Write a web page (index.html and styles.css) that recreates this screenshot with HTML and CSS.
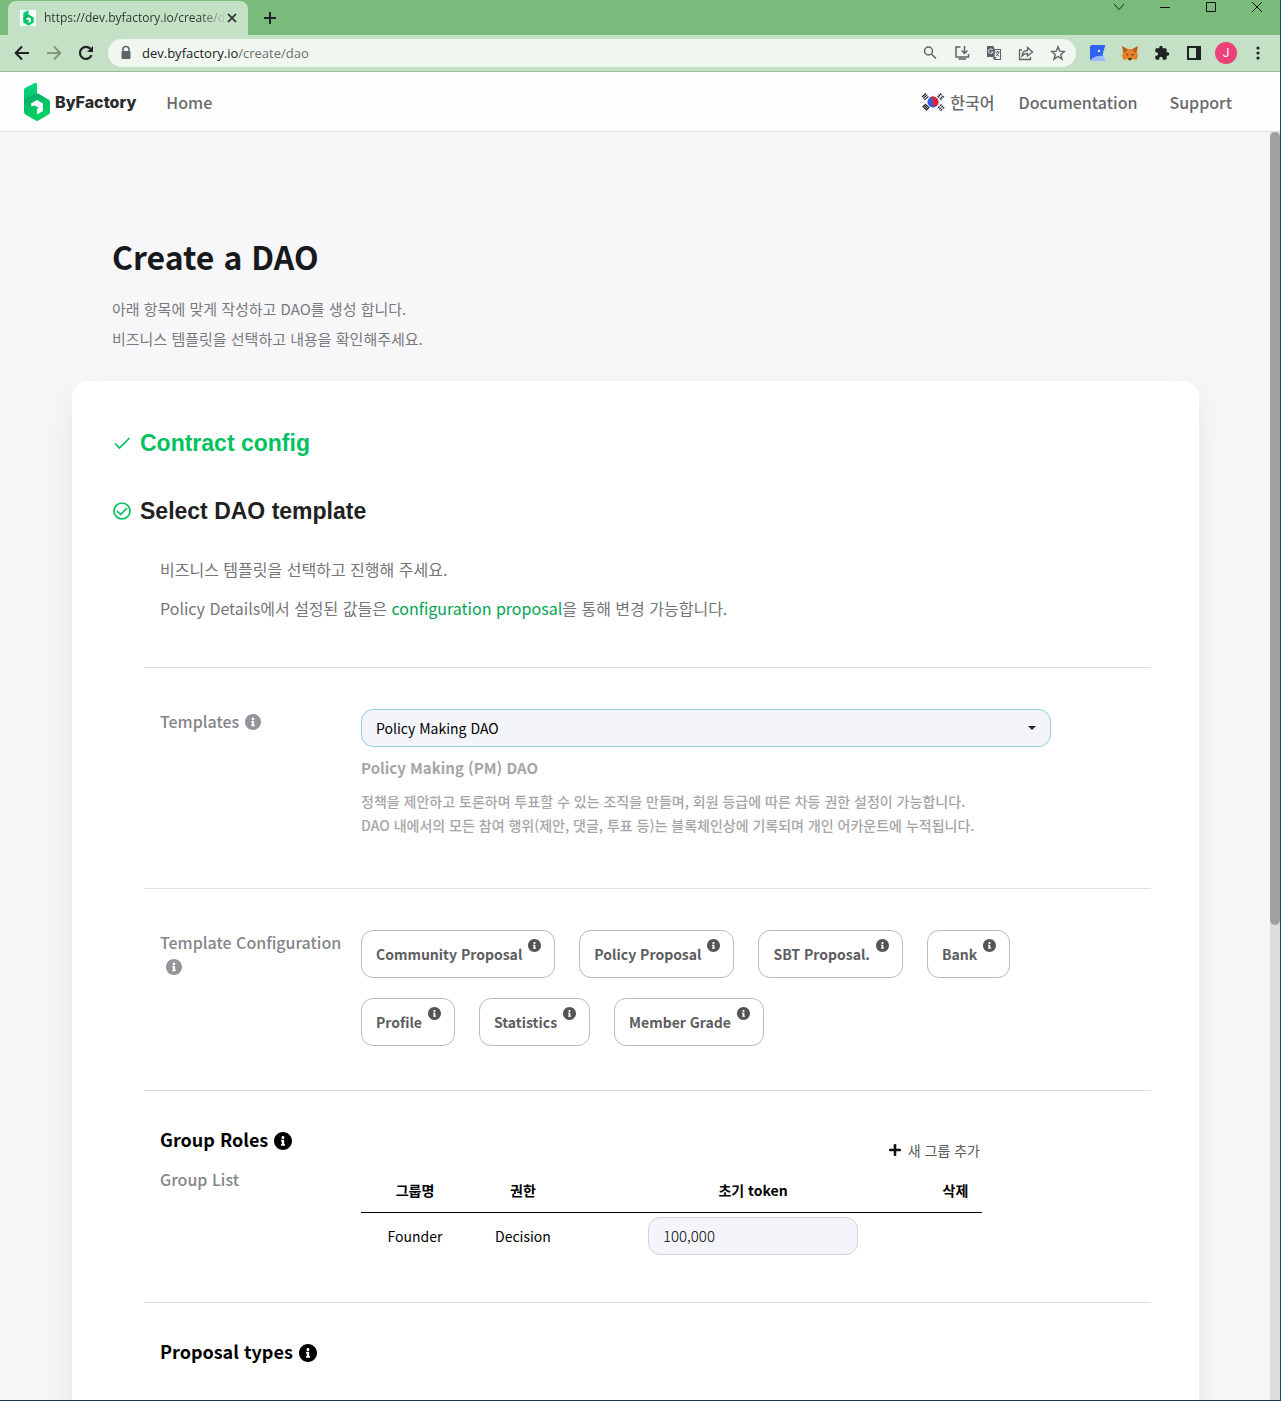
FILE: index.html
```html
<!DOCTYPE html>
<html lang="ko">
<head>
<meta charset="utf-8">
<title>Create a DAO - ByFactory</title>
<link rel="stylesheet" href="styles.css">
</head>
<body>
<svg class="defs" aria-hidden="true">
  <defs>
    <linearGradient id="stem" x1="0" y1="0" x2="0" y2="1"><stop offset="0" stop-color="#0bd982"/><stop offset="1" stop-color="#04b868"/></linearGradient>
    <linearGradient id="cube" x1="0" y1="0" x2="0.4" y2="1"><stop offset="0" stop-color="#0aa565"/><stop offset="0.5" stop-color="#06c167"/><stop offset="1" stop-color="#00d264"/></linearGradient>
    <symbol id="logo" viewBox="0 0 26 40">
      <path fill="url(#stem)" d="M1 6 10.500 1Q13 0 13 3V13L0 24V8Q0 6.700 1 6Z"/>
      <path fill="url(#cube)" d="M1.500 17.500 11.500 11.800Q13 11 14.500 11.800L24.500 17.500Q26 18.400 26 20V30Q26 31.700 24.500 32.600L14.500 38.500Q13 39.300 11.500 38.500L1.500 32.600Q0 31.700 0 30V20Q0 18.400 1.500 17.500Z"/>
      <path fill="#fff" d="M7 21.500 13 18 19 21.500V29L13 32.500V27.500L14.500 25.500 10.500 23.500 7.500 24.500Z"/>
    </symbol>
    <symbol id="info" viewBox="8 8 496 496"><path fill="currentColor" d="M256 8C119.043 8 8 119.083 8 256c0 136.997 111.043 248 248 248s248-111.003 248-248C504 119.083 392.957 8 256 8zm0 110c23.196 0 42 18.804 42 42s-18.804 42-42 42-42-18.804-42-42 18.804-42 42-42zm56 254c0 6.627-5.373 12-12 12h-88c-6.627 0-12-5.373-12-12v-24c0-6.627 5.373-12 12-12h12v-64h-12c-6.627 0-12-5.373-12-12v-24c0-6.627 5.373-12 12-12h64c6.627 0 12 5.373 12 12v100h12c6.627 0 12 5.373 12 12v24z"/></symbol>
  </defs>
</svg>
<div class="window">
  <div class="tabstrip">
    <div class="tab">
      <span class="favicon"><svg width="11" height="16"><use href="#logo"/></svg></span>
      <span class="tab-title">https://dev.byfactory.io/create/d</span>
      <button class="icon-button" aria-label="Close tab"><svg width="10" height="10" viewBox="0 0 10 10"><path d="M1 1 9 9M9 1 1 9" stroke="#202124" stroke-width="1.700"/></svg></button>
    </div>
    <button class="icon-button new-tab" aria-label="New tab"><svg width="12" height="12" viewBox="0 0 12 12"><path d="M6 0V12M0 6H12" stroke="#202124" stroke-width="2"/></svg></button>
    <div class="window-controls">
      <button class="icon-button" aria-label="Search tabs"><svg width="12" height="12" viewBox="0 0 12 12"><path d="M1 3 6 8.500 11 3" fill="none" stroke="#202124"/></svg></button>
      <button class="icon-button" aria-label="Minimize"><svg width="12" height="12" viewBox="0 0 12 12"><path d="M1 6.500H11" stroke="#111"/></svg></button>
      <button class="icon-button" aria-label="Maximize"><svg width="12" height="12" viewBox="0 0 12 12"><path d="M1.500 1.500H10.500V10.500H1.500Z" fill="none" stroke="#111"/></svg></button>
      <button class="icon-button" aria-label="Close"><svg width="12" height="12" viewBox="0 0 12 12"><path d="M1 1 11 11M11 1 1 11" stroke="#111"/></svg></button>
    </div>
  </div>

  <div class="toolbar">
    <button class="icon-button" aria-label="Back"><svg width="16" height="16" viewBox="0 0 16 16"><path d="M15 8H2M8 1.500 1.700 8 8 14.500" fill="none" stroke="#202124" stroke-width="2"/></svg></button>
    <button class="icon-button" aria-label="Forward"><svg width="16" height="16" viewBox="0 0 16 16"><path d="M1 8H14M8 1.500 14.300 8 8 14.500" fill="none" stroke="#84987f" stroke-width="2"/></svg></button>
    <button class="icon-button" aria-label="Reload"><svg width="16" height="16" viewBox="0 0 16 16"><path d="M13.500 10.200A6 6 0 1 1 12.300 3.800" fill="none" stroke="#202124" stroke-width="2.200"/><path d="M15 1V7H9Z" fill="#202124"/></svg></button>
    <div class="omnibox">
      <svg class="lock" width="16" height="16" viewBox="0 0 16 16"><path d="M5 7V4.500a3 3 0 0 1 6 0V7" fill="none" stroke="#5f6368" stroke-width="1.500"/><rect x="3.500" y="6" width="9" height="8" rx="1" fill="#5f6368"/></svg>
      <span class="url">dev.byfactory.io<span class="path">/create/dao</span></span>
      <button class="icon-button" aria-label="Zoom"><svg width="16" height="16" viewBox="0 0 16 16" fill="none" stroke="#5f6368" stroke-width="1.500"><circle cx="6.500" cy="6" r="4"/><path d="M9.500 9 14 13.500"/></svg></button>
      <button class="icon-button" aria-label="Install"><svg width="16" height="16" viewBox="0 0 16 16" fill="none" stroke="#5f6368" stroke-width="1.500"><path d="M6.500 2H2V12H14.500V9M4.500 14H12M10.500 1V8M7.500 5.500 10.500 8.500 13.500 5.500"/></svg></button>
      <button class="icon-button" aria-label="Translate"><svg width="16" height="16" viewBox="0 0 16 16"><path fill="#5f6368" d="M1 1H7.500L8.500 4H15V15H8L7 12H1Z"/><path fill="#f0f7f0" d="M9 5H14V14H9.500L10.500 12H8.500Z"/><path d="M6.800 5A2.300 2.300 0 1 0 7 7H5" fill="none" stroke="#f0f7f0"/><path d="M9.500 7H13.500M11.500 6V7M13 7Q12 10 10 11M10.500 8.500 13 11.500" fill="none" stroke="#5f6368"/></svg></button>
      <button class="icon-button" aria-label="Share"><svg width="16" height="16" viewBox="0 0 16 16" fill="none" stroke="#5f6368" stroke-width="1.300"><path d="M4 5H1.500V14.500H12.500V12M4 11Q4.500 5.500 9.500 5.500V2.500L14.500 7 9.500 11V8.500Q6 8.500 4 11Z"/></svg></button>
      <button class="icon-button" aria-label="Bookmark"><svg width="16" height="16" viewBox="0 0 16 16"><path d="M8 1.800 9.700 6.200 14.400 6.500 10.800 9.500 12 14.100 8 11.500 4 14.100 5.200 9.500 1.600 6.500 6.300 6.200Z" fill="none" stroke="#5f6368" stroke-width="1.400"/></svg></button>
    </div>
    <div class="extensions">
      <button class="icon-button" aria-label="Wallet"><svg width="16" height="16" viewBox="0 0 16 16"><path fill="#9bb8fb" d="M0 16V11L13 10 16 16Z"/><path fill="#2f62f1" d="M2 0H15.500Q13 7 12.500 11 6 10 0 15V2Q0 0 2 0Z"/><circle cx="9" cy="6" r="1.200" fill="#e8f3ff"/></svg></button>
      <button class="icon-button" aria-label="Fox wallet"><svg width="16" height="16" viewBox="0 0 16 16"><path fill="#e9812b" d="M0 1 6 4H10L16 1 15 7 16 11 14.500 15 10.500 14 9 15.500H7L5.500 14 1.500 15 0 11 1 7Z"/><path fill="#b85c22" d="M0 1 6 5 2 8ZM16 1 10 5 14 8Z"/><path fill="#402f2b" d="M4 8.500 7 10 5 10.500ZM12 8.500 9 10 11 10.500ZM6.500 13H9.500V15H6.500Z"/></svg></button>
      <button class="icon-button" aria-label="Extensions"><svg width="16" height="16" viewBox="0 0 24 24"><path fill="#202124" d="M20.500 11H19V7c0-1.100-.9-2-2-2h-4V3.500a2.500 2.500 0 0 0-5 0V5H4c-1.100 0-2 .9-2 2v3.800h1.500a2.700 2.700 0 0 1 0 5.400H2V20c0 1.100.9 2 2 2h3.800v-1.500a2.700 2.700 0 0 1 5.400 0V22H17c1.100 0 2-.9 2-2v-4h1.500a2.500 2.500 0 0 0 0-5z"/></svg></button>
      <button class="icon-button" aria-label="Side panel"><svg width="16" height="16" viewBox="0 0 16 16"><path fill="#202124" d="M1 1H15V15H1ZM3 3V13H10V3Z" fill-rule="evenodd"/></svg></button>
      <button class="avatar" aria-label="Profile">J</button>
      <button class="icon-button" aria-label="Menu"><svg width="16" height="16" viewBox="0 0 16 16" fill="#202124"><circle cx="8" cy="3" r="1.600"/><circle cx="8" cy="8" r="1.600"/><circle cx="8" cy="13" r="1.600"/></svg></button>
    </div>
  </div>

  <header class="site-header">
    <a class="brand" href="#"><svg width="26" height="40"><use href="#logo"/></svg><span>ByFactory</span></a>
    <a class="nav-link" href="#">Home</a>
    <nav class="nav-right">
      <a class="nav-link language" href="#"><svg width="26" height="20" viewBox="0 0 26 20"><rect width="26" height="20" fill="#f7fbff"/><g transform="rotate(28 13 10)"><circle cx="13" cy="10" r="5.500" fill="#3b5bdb"/><path fill="#e0202a" d="M7.500 10A5.500 5.500 0 0 1 18.500 10 2.750 2.750 0 0 1 13 10 2.750 2.750 0 0 0 7.500 10Z"/></g><g fill="none" stroke="#222" stroke-width="1.100"><path d="M2 5 6 1.500M3.200 6.400 7.200 2.900M4.400 7.800 8.400 4.300"/><path d="M18.500 2.500 23 7M20 1.500 24.200 5.600M17.500 4 21.500 8" stroke-dasharray="2.300 1"/><path d="M3 14.500 5.500 12.500 9 15.500 6.500 18ZM4.300 13.500 7.800 16.800"/><path d="M18 16 21.500 12.500M19.200 17.400 22.900 13.900M20.500 18.800 24.200 15.200" stroke-dasharray="2.200 .8"/></g></svg><span>한국어</span></a>
      <a class="nav-link" href="#">Documentation</a>
      <a class="nav-link" href="#">Support</a>
    </nav>
  </header>

  <div class="viewport">
    <main class="page">
      <div class="intro">
        <h1>Create a DAO</h1>
        <p>아래 항목에 맞게 작성하고 DAO를 생성 합니다.<br>비즈니스 템플릿을 선택하고 내용을 확인해주세요.</p>
      </div>
      <div class="card">
        <h2 class="step done"><svg width="20" height="20" viewBox="0 0 20 20"><path d="M3 10.500 7.500 15 17.500 5" fill="none" stroke="#03c160" stroke-width="1.700"/></svg>Contract config</h2>
        <h2 class="step"><svg width="20" height="20" viewBox="0 0 20 20" fill="none" stroke="#03c160" stroke-width="1.700"><circle cx="10" cy="10" r="8"/><path d="M5 10 8.700 13.500 15 7"/></svg>Select DAO template</h2>

        <div class="panel">
          <section class="lead">
            <p>비즈니스 템플릿을 선택하고 진행해 주세요.</p>
            <p>Policy Details에서 설정된 값들은 <a href="#">configuration proposal</a>을 통해 변경 가능합니다.</p>
          </section>

          <section class="row template-row">
            <label class="field-label" for="template">Templates<svg class="info" width="16" height="16"><use href="#info"/></svg></label>
            <div class="field">
              <div class="select-wrap">
                <select id="template"><option>Policy Making DAO</option></select>
                <svg class="caret" width="8" height="4" viewBox="0 0 8 4"><path d="M0 0H8L4 4Z" fill="#212529"/></svg>
              </div>
              <div class="hint">
                <h3>Policy Making (PM) DAO</h3>
                <p>정책을 제안하고 토론하며 투표할 수 있는 조직을 만들며, 회원 등급에 따른 차등 권한 설정이 가능합니다.<br>DAO 내에서의 모든 참여 행위(제안, 댓글, 투표 등)는 블록체인상에 기록되며 개인 어카운트에 누적됩니다.</p>
              </div>
            </div>
          </section>

          <section class="row">
            <div class="field-label">Template Configuration<svg class="info" width="16" height="16"><use href="#info"/></svg></div>
            <div class="field chips">
              <button class="chip">Community Proposal<svg width="13" height="13"><use href="#info"/></svg></button>
              <button class="chip">Policy Proposal<svg width="13" height="13"><use href="#info"/></svg></button>
              <button class="chip">SBT Proposal.<svg width="13" height="13"><use href="#info"/></svg></button>
              <button class="chip">Bank<svg width="13" height="13"><use href="#info"/></svg></button>
              <button class="chip">Profile<svg width="13" height="13"><use href="#info"/></svg></button>
              <button class="chip">Statistics<svg width="13" height="13"><use href="#info"/></svg></button>
              <button class="chip">Member Grade<svg width="13" height="13"><use href="#info"/></svg></button>
            </div>
          </section>

          <section class="row roles">
            <div>
              <h3 class="group-title">Group Roles<svg width="18" height="18"><use href="#info"/></svg></h3>
              <div class="field-label">Group List</div>
            </div>
            <div class="group-list">
              <button class="add"><svg width="12" height="12" viewBox="0 32 448 448"><path fill="#111" d="M416 208H272V64c0-17.670-14.330-32-32-32h-32c-17.670 0-32 14.330-32 32v144H32c-17.670 0-32 14.330-32 32v32c0 17.670 14.330 32 32 32h144v144c0 17.670 14.330 32 32 32h32c17.670 0 32-14.330 32-32V304h144c17.670 0 32-14.330 32-32v-32c0-17.670-14.330-32-32-32z"/></svg>새 그룹 추가</button>
              <table>
                <colgroup><col class="col-name"><col class="col-name"><col><col class="col-delete"></colgroup>
                <thead><tr><th>그룹명</th><th>권한</th><th>초기 token</th><th>삭제</th></tr></thead>
                <tbody><tr><td>Founder</td><td>Decision</td><td><input type="text" value="100,000" aria-label="초기 token"></td><td></td></tr></tbody>
              </table>
            </div>
          </section>

          <section class="types">
            <h3 class="group-title">Proposal types<svg width="18" height="18"><use href="#info"/></svg></h3>
          </section>
        </div>
      </div>
    </main>
    <div class="scrollbar"><div class="thumb"></div></div>
  </div>
</div>
</body>
</html>
```
FILE: styles.css
```css
* { box-sizing: border-box; }
body, h1, h2, h3, p { margin: 0; }
body {
  font-family: "Noto Sans CJK KR", "Noto Sans", sans-serif;
  font-size: 16px;
  line-height: 24px;
  color: #000;
}
button, select, input { font-family: inherit; }
button { border: 0; background: none; padding: 0; cursor: pointer; }
a { text-decoration: none; }
svg { display: block; flex: none; }
.defs { position: absolute; width: 0; height: 0; }

.window {
  display: flex;
  flex-direction: column;
  height: 100vh;
  border-right: 1px solid #1b4c66;
  border-bottom: 1px solid #1b3a48;
  overflow: hidden;
}

/* Browser frame */
.icon-button { display: flex; align-items: center; justify-content: center; }
.tabstrip {
  display: flex;
  align-items: flex-end;
  flex: none;
  height: 35px;
  padding-left: 8px;
  background: #7abb7b;
}
.tab {
  display: flex;
  align-items: center;
  width: 240px;
  height: 34px;
  padding: 0 11px 0 12px;
  border-radius: 8px 8px 0 0;
  background: #c5e1c5;
}
.favicon { display: flex; justify-content: center; width: 16px; background: #fff; margin-right: 8px; }
.tab-title {
  flex: 1;
  white-space: nowrap;
  font: 12px/16px "Open Sans", sans-serif;
  color: #2c3a2d;
  mask-image: linear-gradient(to right, #000 85%, transparent);
}
.new-tab { width: 44px; height: 34px; }
.window-controls { display: flex; gap: 34px; margin-left: auto; padding-right: 17px; align-self: flex-start; padding-top: 1px; }
.toolbar {
  display: flex;
  align-items: center;
  flex: none;
  height: 37px;
  padding: 0 14px;
  gap: 16px;
  background: #c5e1c5;
  border-bottom: 1px solid #9dbb9d;
}
.omnibox {
  display: flex;
  align-items: center;
  flex: 1;
  gap: 16px;
  height: 28px;
  padding: 0 10px;
  margin-right: -2px;
  margin-left: -2px;
  border-radius: 14px;
  background: #f0f7f0;
}
.lock { margin-right: -8px; }
.url { flex: 1; font: 13px/20px "Open Sans", sans-serif; color: #202124; }
.path { color: #6a706b; }
.extensions { display: flex; align-items: center; gap: 16px; }
.avatar {
  width: 22px;
  height: 22px;
  margin: 0 -3px;
  border-radius: 50%;
  background: #ec407a;
  color: #fff;
  font: 12px/22px Roboto, sans-serif;
}

/* Site header */
.site-header {
  display: flex;
  align-items: center;
  flex: none;
  height: 60px;
  padding: 0 48px 0 24px;
  background: #fefefe;
  border-bottom: 1px solid #dfe0e2;
}
.brand { display: flex; align-items: center; gap: 5px; margin-right: 30px; }
.brand span { font: 800 16px/24px Inter, sans-serif; color: #2b2b2b; }
.nav-link { font-weight: 500; color: #69696c; }
.nav-right { display: flex; align-items: center; gap: 32px; margin-left: auto; }
.language { display: flex; align-items: center; gap: 4px; margin-right: -8px; }

/* Scrolling page */
.viewport { display: flex; flex: 1; min-height: 0; background: #f7f7f9; }
.page { flex: 1; min-width: 0; padding: 96px 71px 0 72px; overflow: hidden; }
.scrollbar { flex: none; width: 10px; background: #dddde0; }
.thumb { height: 62.5%; border-radius: 5px; background: #a0a0a2; }
.intro { padding: 0 40px 27px; }
h1 { font-size: 32px; line-height: 56px; font-weight: 700; color: #17191c; }
.intro p { margin-top: 10px; line-height: 30px; font-size: 15px; color: #7a7a7e; }
.card {
  min-height: 1100px;
  padding: 44px 48px 48px 40px;
  border-radius: 16px;
  background: #fff;
  box-shadow: 0 12px 36px rgba(0, 0, 0, 0.07);
}
.step {
  display: flex;
  align-items: center;
  gap: 8px;
  margin-bottom: 32px;
  font: 700 23px/36px "Liberation Sans", Arial, sans-serif;
  color: #212121;
}
.done { color: #03c160; }
.panel { margin: -4px 0 0 32px; }
.panel section { padding-left: 16px; padding-right: 16px; border-bottom: 1px solid #dcdcde; }
.lead { height: 111px; color: #75757a; }
.lead p { padding-bottom: 15px; }
.lead a { color: #03a355; }
.row {
  display: grid;
  grid-template-columns: 185px minmax(0, 690px);
  column-gap: 16px;
  padding-top: 41px;
  padding-bottom: 44px;
}
.panel .template-row { padding-bottom: 42px; }
.field-label { font-weight: 500; color: #85858b; }
.info { display: inline-block; margin-left: 6px; vertical-align: -2px; color: #94949c; }
.select-wrap { position: relative; }
select, input {
  width: 100%;
  height: 38px;
  padding: 0 14px;
  border: 1px solid #d3d4da;
  border-radius: 12px;
  background: #f4f5fa;
  font-size: 14px;
  color: #000;
}
select { appearance: none; border-color: #95cbdc; }
.caret { position: absolute; right: 15px; top: 17px; }
.hint { padding: 9px 0; color: #a5a5a8; }
.hint h3 { font-size: 15px; line-height: 24px; font-weight: 700; }
.hint p { margin-top: 9px; font-size: 14px; line-height: 24px; font-weight: 500; }
.chips { display: flex; flex-wrap: wrap; gap: 20px 24px; }
.chip {
  display: flex;
  align-items: center;
  gap: 6px;
  height: 48px;
  padding: 0 13px 0 14px;
  border: 1px solid #bababa;
  border-radius: 12px;
  font-size: 14px;
  line-height: 20px;
  font-weight: 700;
  color: #5d5d5f;
}
.chip svg { margin-bottom: 17px; color: #555; }
.group-title { display: flex; align-items: center; gap: 6px; font-size: 18px; line-height: 28px; font-weight: 700; }
.group-title svg { margin-top: 4px; }
.panel .roles { padding-top: 34px; padding-bottom: 43px; }
.roles .field-label { margin-top: 14px; }
.group-list { max-width: 621px; padding-top: 13px; }
.add { display: flex; align-items: center; gap: 7px; margin: 0 2px 0 auto; font-size: 14px; line-height: 24px; color: #59595b; }
table { width: 100%; table-layout: fixed; border-collapse: collapse; font-size: 14px; text-align: center; }
.col-name { width: 108px; }
.col-delete { width: 53px; }
th { height: 50px; padding: 6px 0 0; border-bottom: 1px solid #000; font-weight: 700; }
td { height: 47px; padding: 0; }
td input { display: block; width: 210px; margin: 0 auto; font-size: 15px; font-weight: 300; }
.panel .types { padding-top: 34px; border-bottom: 0; }
```
